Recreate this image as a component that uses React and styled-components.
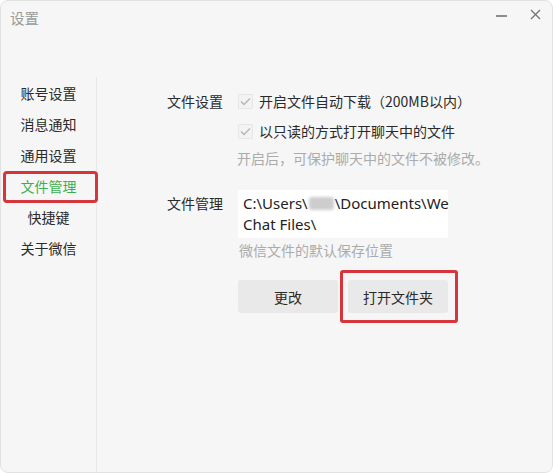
import React from "react";
import styled, { createGlobalStyle } from "styled-components";

const Global = createGlobalStyle`
  html, body { margin: 0; padding: 0; background: #ffffff; }
  * { box-sizing: border-box; }
  body { font-family: "Noto Sans CJK SC", "Noto Sans", sans-serif; }
`;

const Window = styled.div`
  width: 553px;
  height: 473px;
  background: #f6f6f6;
  border: 1px solid #e2e2e2;
  border-radius: 8px;
  display: flex;
  flex-direction: column;
  overflow: hidden;
  color: #2b2b2b;
`;

const TitleBar = styled.div`
  height: 34px;
  flex: none;
  display: flex;
  align-items: center;
  justify-content: space-between;
  padding: 0 11px 0 9px;
`;

const Title = styled.div`
  font-size: 14.5px;
  line-height: 20px;
  color: #9a9a9a;
`;

const Controls = styled.div`
  display: flex;
  align-items: center;
  gap: 23px;
  margin-top: -7px;
`;

const CtrlIcon = styled.svg`
  display: block;
`;

const Body = styled.div`
  flex: 1;
  display: flex;
  margin-top: 42px;
  min-height: 0;
`;

const Sidebar = styled.nav`
  width: 96px;
  flex: none;
  border-right: 1px solid #e8e8e8;
  display: flex;
  flex-direction: column;
`;

const NavItem = styled.div`
  position: relative;
  height: 31px;
  display: flex;
  align-items: center;
  justify-content: center;
  font-size: 14px;
  color: ${(p) => (p.$active ? "#3cb14d" : "#2a2a2a")};
  ${(p) =>
    p.$active &&
    `
    &::after {
      content: "";
      position: absolute;
      top: 1px;
      bottom: -2px;
      left: 2px;
      right: -2px;
      border: 3px solid #d6353c;
      border-radius: 4px;
    }
  `}
`;

const Content = styled.div`
  flex: 1;
  padding: 13px 0 0 70px;
  display: flex;
  flex-direction: column;
`;

const Section = styled.div`
  display: grid;
  grid-template-columns: 71px 1fr;
  margin-top: ${(p) => p.$top || 0}px;
`;

const Label = styled.div`
  font-size: 14px;
  line-height: 22px;
  color: #2a2a2a;
  padding-top: ${(p) => p.$pt || 0}px;
`;

const Field = styled.div`
  display: flex;
  flex-direction: column;
  align-items: flex-start;
`;

const CheckRow = styled.div`
  display: flex;
  align-items: center;
  gap: 6px;
  height: 22px;
  font-size: 14px;
  color: #2a2a2a;
  margin-top: ${(p) => p.$top || 0}px;
`;

const Box = styled.span`
  width: 15px;
  height: 15px;
  border: 1px solid #e6e6e6;
  background: #f3f3f3;
  display: inline-flex;
  align-items: center;
  justify-content: center;
  border-radius: 1px;
`;

const Hint = styled.div`
  font-size: 14px;
  line-height: 22px;
  color: #ababab;
  margin-top: ${(p) => p.$top || 0}px;
  margin-left: ${(p) => p.$left || 0}px;
`;

const PathBox = styled.div`
  width: 210px;
  height: 48px;
  background: #ffffff;
  padding: 3px 5px;
  font-family: "Noto Sans", "Noto Sans CJK SC", sans-serif;
  font-size: 15px;
  line-height: 21px;
  color: #222;
  white-space: nowrap;
`;

const Blur = styled.span`
  display: inline-block;
  width: 25px;
  height: 13px;
  margin: 0 1px;
  vertical-align: -1px;
  background: #cdcdcd;
  border-radius: 3px;
  filter: blur(1.5px);
`;

const Buttons = styled.div`
  display: flex;
  gap: 10px;
  margin-top: 19px;
`;

const Button = styled.button`
  width: 100px;
  height: 33px;
  border: none;
  border-radius: 3px;
  background: #e9e9e9;
  color: #2a2a2a;
  font-family: "Noto Sans CJK SC", sans-serif;
  font-size: 14px;
  padding: 0;
  cursor: pointer;
`;

const Highlight = styled.div`
  position: relative;
  &::after {
    content: "";
    position: absolute;
    top: -10px;
    bottom: -10px;
    left: -8px;
    right: -10px;
    border: 3px solid #d6353c;
    border-radius: 3px;
    pointer-events: none;
  }
`;

const Check = () => (
  <svg width="11" height="9" viewBox="0 0 11 9">
    <polyline points="1,4.5 4,7.5 10,1.5" fill="none" stroke="#b4b4b4" strokeWidth="1.3" />
  </svg>
);

const navItems = ["账号设置", "消息通知", "通用设置", "文件管理", "快捷键", "关于微信"];

export default function App() {
  return (
    <>
      <Global />
      <Window>
        <TitleBar>
          <Title>设置</Title>
          <Controls>
            <CtrlIcon width="11" height="10" viewBox="0 0 11 10">
              <line x1="0" y1="6" x2="11" y2="6" stroke="#6a6a6a" strokeWidth="1.4" />
            </CtrlIcon>
            <CtrlIcon width="11" height="11" viewBox="0 0 11 11">
              <path d="M1 1 L10 10 M10 1 L1 10" stroke="#777" strokeWidth="1.4" />
            </CtrlIcon>
          </Controls>
        </TitleBar>
        <Body>
          <Sidebar>
            {navItems.map((t) => (
              <NavItem key={t} $active={t === "文件管理"}>
                {t}
              </NavItem>
            ))}
          </Sidebar>
          <Content>
            <Section>
              <Label>文件设置</Label>
              <Field>
                <CheckRow>
                  <Box><Check /></Box>
                  开启文件自动下载（200MB以内）
                </CheckRow>
                <CheckRow $top={8}>
                  <Box><Check /></Box>
                  以只读的方式打开聊天中的文件
                </CheckRow>
                <Hint $top={5} $left={-1}>开启后，可保护聊天中的文件不被修改。</Hint>
              </Field>
            </Section>
            <Section $top={21}>
              <Label $pt={2}>文件管理</Label>
              <Field>
                <PathBox>
                  C:\Users\<Blur />\Documents\We
                  <br />
                  Chat Files\
                </PathBox>
                <Hint $top={1} $left={1}>微信文件的默认保存位置</Hint>
                <Buttons>
                  <Button>更改</Button>
                  <Highlight>
                    <Button>打开文件夹</Button>
                  </Highlight>
                </Buttons>
              </Field>
            </Section>
          </Content>
        </Body>
      </Window>
    </>
  );
}
